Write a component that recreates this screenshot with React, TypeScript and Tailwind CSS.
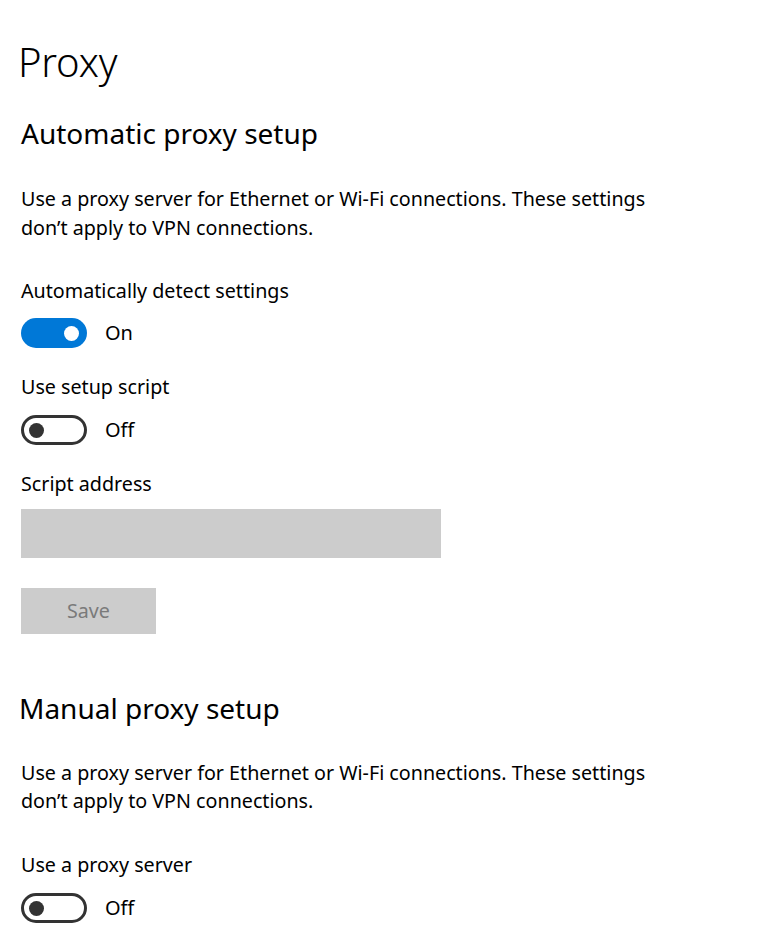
const font = { fontFamily: '"Noto Sans", "Open Sans", sans-serif' };

function Toggle({ on }: { on: boolean }) {
  return (
    <div className="flex items-center h-[30px]">
      {on ? (
        <div className="w-[66px] h-[30px] rounded-full bg-[#0078d7] flex items-center justify-end pr-[8px]">
          <div className="w-[15px] h-[15px] rounded-full bg-white" />
        </div>
      ) : (
        <div className="w-[66px] h-[30px] rounded-full border-[3px] border-[#333333] flex items-center pl-[5px]">
          <div className="w-[15px] h-[15px] rounded-full bg-[#333333]" />
        </div>
      )}
      <span className="ml-[18px] text-[20px] leading-[28px] text-black">{on ? 'On' : 'Off'}</span>
    </div>
  );
}

export default function App() {
  return (
    <div className="min-h-screen bg-white text-black px-[21px] pt-[34px]" style={font}>
      <h1 className="-ml-[3px] text-[40px] leading-[56px] font-light tracking-[-0.2px]">Proxy</h1>

      {/* Automatic */}
      <h2 className="mt-[25px] text-[28px] leading-[36px]">Automatic proxy setup</h2>
      <p className="mt-[33px] text-[19.7px] leading-[29px] max-w-[640px]">
        Use a proxy server for Ethernet or Wi-Fi connections. These settings don’t apply to VPN connections.
      </p>

      <div className="mt-[35px] text-[19.7px] leading-[28px]">Automatically detect settings</div>
      <div className="mt-[13px]">
        <Toggle on />
      </div>

      <div className="mt-[25px] text-[19.7px] leading-[28px]">Use setup script</div>
      <div className="mt-[14px]">
        <Toggle on={false} />
      </div>

      <div className="mt-[25px] text-[19.7px] leading-[28px]">Script address</div>
      <div className="mt-[11px] w-[420px] h-[49px] bg-[#cccccc]" />
      <button className="mt-[30px] w-[135px] h-[46px] bg-[#cccccc] text-[#7a7a7a] text-[19.7px] block">
        Save
      </button>

      {/* Manual */}
      <h2 className="-ml-[2px] mt-[56px] text-[28px] leading-[36px]">Manual proxy setup</h2>
      <p className="mt-[33px] text-[19.7px] leading-[28px] max-w-[640px]">
        Use a proxy server for Ethernet or Wi-Fi connections. These settings don’t apply to VPN connections.
      </p>

      <div className="mt-[36px] text-[19.7px] leading-[28px]">Use a proxy server</div>
      <div className="mt-[14px]">
        <Toggle on={false} />
      </div>
    </div>
  );
}
